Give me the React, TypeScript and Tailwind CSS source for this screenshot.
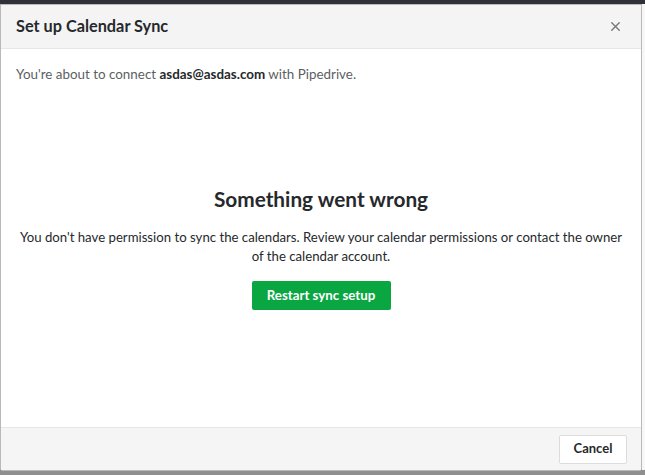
import { X } from 'lucide-react';

const font = { fontFamily: 'Lato, "Open Sans", sans-serif' };

export default function App() {
  return (
    <div className="w-[645px] h-[475px] bg-[#8f8f8f] flex flex-col overflow-hidden" style={font}>
      <div className="h-[4px] bg-[#2f3136] shrink-0" />
      <div className="flex flex-1 min-h-0">
        {/* Modal */}
        <div className="w-[642px] h-[467px] bg-white border border-[#b9b9b9] rounded-b-[3px] flex flex-col">
          <div className="h-[44px] bg-[#f4f4f4] border-b border-[#e6e6e6] flex items-center justify-between pl-[15px] pr-[18px] shrink-0">
            <h2 className="text-[16.3px] font-bold text-[#26292c]">Set up Calendar Sync</h2>
            <X className="w-[15px] h-[15px] text-[#747678]" strokeWidth={2.2} />
          </div>

          <div className="flex-1 flex flex-col">
            <p className="text-[13.4px] text-[#5c5f62] pl-[15px] pt-[15px]">
              You're about to connect <span className="font-bold text-[#26292c]">asdas@asdas.com</span> with Pipedrive.
            </p>

            <div className="flex flex-col items-center text-center mt-[102px]">
              <h3 className="text-[20.8px] font-bold text-[#26292c] leading-[26px]">Something went wrong</h3>
              <p className="mt-[16px] text-[13.2px] leading-[19px] text-[#26292c]">
                <span className="whitespace-nowrap">
                  You don't have permission to sync the calendars. Review your calendar permissions or contact the owner
                </span>
                <br />
                of the calendar account.
              </p>
              <button className="mt-[15px] h-[29px] w-[139px] rounded-[2px] bg-[#0aa642] text-white text-[13.3px] font-bold">
                Restart sync setup
              </button>
            </div>
          </div>

          <div className="h-[43px] bg-[#f5f5f5] border-t border-[#e6e6e6] flex items-center justify-end pr-[14px] shrink-0">
            <button className="h-[29px] w-[68px] bg-white border border-[#dcdcdc] rounded-[2px] text-[13px] font-bold text-[#26292c]">
              Cancel
            </button>
          </div>
        </div>
        <div className="flex-1 bg-[#f7f7f7] h-[466px]" />
      </div>
    </div>
  );
}
